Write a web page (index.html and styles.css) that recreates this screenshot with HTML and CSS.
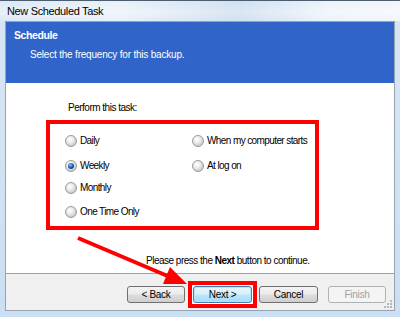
FILE: index.html
```html
<!DOCTYPE html>
<html>
<head>
<meta charset="utf-8">
<title>New Scheduled Task</title>
<link rel="stylesheet" href="styles.css">
</head>
<body>
<div class="window">
  <div class="titlebar">New Scheduled Task</div>
  <div class="client">
    <div class="header">
      <div class="h-title">Schedule</div>
      <div class="h-sub">Select the frequency for this backup.</div>
    </div>
    <div class="content">
      <div class="prompt">Perform this task:</div>
      <div class="options">
        <div class="opt"><span class="radio"></span>Daily</div>
        <div class="opt"><span class="radio"></span>When my computer starts</div>
        <div class="opt"><span class="radio checked"></span>Weekly</div>
        <div class="opt"><span class="radio"></span>At log on</div>
        <div class="opt"><span class="radio"></span>Monthly</div>
        <div class="opt"></div>
        <div class="opt"><span class="radio"></span>One Time Only</div>
        <div class="opt"></div>
      </div>
      <div class="hint">Please press the <b>Next</b> button to continue.</div>
    </div>
    <div class="footer">
      <div class="btn">&lt; Back</div>
      <div class="mark"><div class="btn focused">Next &gt;</div></div>
      <div class="btn cancel">Cancel</div>
      <div class="btn disabled">Finish</div>
      <svg class="grip" width="8" height="8" viewBox="0 0 8 8">
        <rect x="6" y="0" width="2" height="2" fill="#b8b8b8"/>
        <rect x="3" y="3" width="2" height="2" fill="#b8b8b8"/>
        <rect x="6" y="3" width="2" height="2" fill="#b8b8b8"/>
        <rect x="0" y="6" width="2" height="2" fill="#b8b8b8"/>
        <rect x="3" y="6" width="2" height="2" fill="#b8b8b8"/>
        <rect x="6" y="6" width="2" height="2" fill="#b8b8b8"/>
      </svg>
    </div>
  </div>
  <svg class="arrow" width="400" height="317" viewBox="0 0 400 317">
    <line x1="78" y1="237" x2="170" y2="276" stroke="#ff0000" stroke-width="4"/>
    <polygon points="187,283 163,283 170,266" fill="#ff0000"/>
  </svg>
</div>
</body>
</html>
```
FILE: styles.css
```css
html, body {
  margin: 0;
  padding: 0;
}
body {
  width: 400px;
  height: 317px;
  overflow: hidden;
  font-family: "Liberation Sans", Arial, sans-serif;
  font-size: 10px;
  letter-spacing: -0.5px;
  color: #000;
}
.window {
  position: relative;
  width: 400px;
  height: 317px;
  box-sizing: border-box;
  border-top: 1px solid #4d5d70;
  background: linear-gradient(to bottom, #dce8f5 0px, #e9f1fa 12px, #d8e6f4 21px, #cadff2 100%);
  display: flex;
  flex-direction: column;
}
.titlebar {
  height: 20px;
  line-height: 20px;
  padding-left: 7px;
  font-size: 11px;
  letter-spacing: -0.35px;
  color: #000;
  background: linear-gradient(to right, rgba(255,255,255,0.0) 0px, rgba(255,255,255,0.35) 120px, rgba(190,210,230,0.35) 240px, rgba(255,255,255,0.45) 330px, rgba(255,255,255,0.6) 400px);
}
.client {
  margin: 0 5px;
  border: 1px solid #95a3b3;
  display: flex;
  flex-direction: column;
  background: #fff;
}
.header {
  height: 61px;
  box-sizing: border-box;
  background: #3064c8;
  color: #fff;
  padding: 7px 0 0 8px;
}
.h-title {
  font-weight: bold;
  line-height: 12px;
  font-size: 10.5px;
  letter-spacing: -0.4px;
}
.h-sub {
  line-height: 12px;
  margin-top: 8px;
  margin-left: 16px;
  letter-spacing: -0.2px;
}
.content {
  height: 190px;
  box-sizing: border-box;
  padding-top: 19px;
  background: #fff;
}
.prompt {
  line-height: 12px;
  margin-left: 62px;
}
.options {
  margin: 6px 0 0 40px;
  width: 273px;
  height: 110px;
  box-sizing: border-box;
  border: 4px solid #ff0000;
  padding: 10px 0 0 15px;
  display: grid;
  grid-template-columns: 127px 1fr;
  grid-template-rows: 25px 22px 24px 14px;
}
.opt {
  display: flex;
  align-items: center;
  height: 14px;
  line-height: 14px;
  letter-spacing: -0.6px;
}
.radio {
  width: 10px;
  height: 10px;
  border-radius: 50%;
  border: 1px solid #9a9a9a;
  background: radial-gradient(circle at 40% 35%, #ffffff 0px, #eeeeee 3px, #cfcfcf 6px);
  margin-right: 3px;
  flex: none;
  position: relative;
}
.radio.checked::after {
  content: "";
  position: absolute;
  left: 2px;
  top: 2px;
  width: 6px;
  height: 6px;
  border-radius: 50%;
  background: radial-gradient(circle at 40% 35%, #8fc3f5 0px, #2a78d0 2px, #0d4a96 3px);
}
.hint {
  margin: 25px 0 0 140px;
  line-height: 12px;
}
.hint b {
  font-weight: bold;
}
.footer {
  position: relative;
  height: 37px;
  box-sizing: border-box;
  border-top: 1px solid #a0a0a0;
  background: #f0f0f0;
  display: flex;
  align-items: flex-start;
  padding-top: 12px;
  padding-left: 121px;
}
.btn {
  width: 58px;
  height: 17px;
  box-sizing: border-box;
  border: 1px solid #707070;
  border-radius: 3px;
  background: linear-gradient(to bottom, #f3f3f3 0%, #ebebeb 48%, #dddddd 52%, #cfcfcf 100%);
  text-align: center;
  line-height: 15px;
  color: #000;
  letter-spacing: -0.3px;
}
.mark {
  margin: -5px 0 0 3px;
  border: 4px solid #ff0000;
  padding: 1px;
  background: #fff;
}
.btn.focused {
  width: 59px;
  border-color: #3c7fb1;
  box-shadow: inset 0 0 0 1px #b7e6fb;
  background: linear-gradient(to bottom, #eaf6fd 0%, #d9f0fc 48%, #bee6fd 52%, #a7d9f5 100%);
}
.btn.cancel {
  margin-left: 2px;
  width: 59px;
}
.btn.disabled {
  margin-left: 10px;
  border-color: #adb2b5;
  background: #f4f4f4;
  color: #a0a0a0;
}
.grip {
  position: absolute;
  right: 2px;
  bottom: 2px;
}
.arrow {
  position: absolute;
  left: 0;
  top: 0;
  pointer-events: none;
}
```
